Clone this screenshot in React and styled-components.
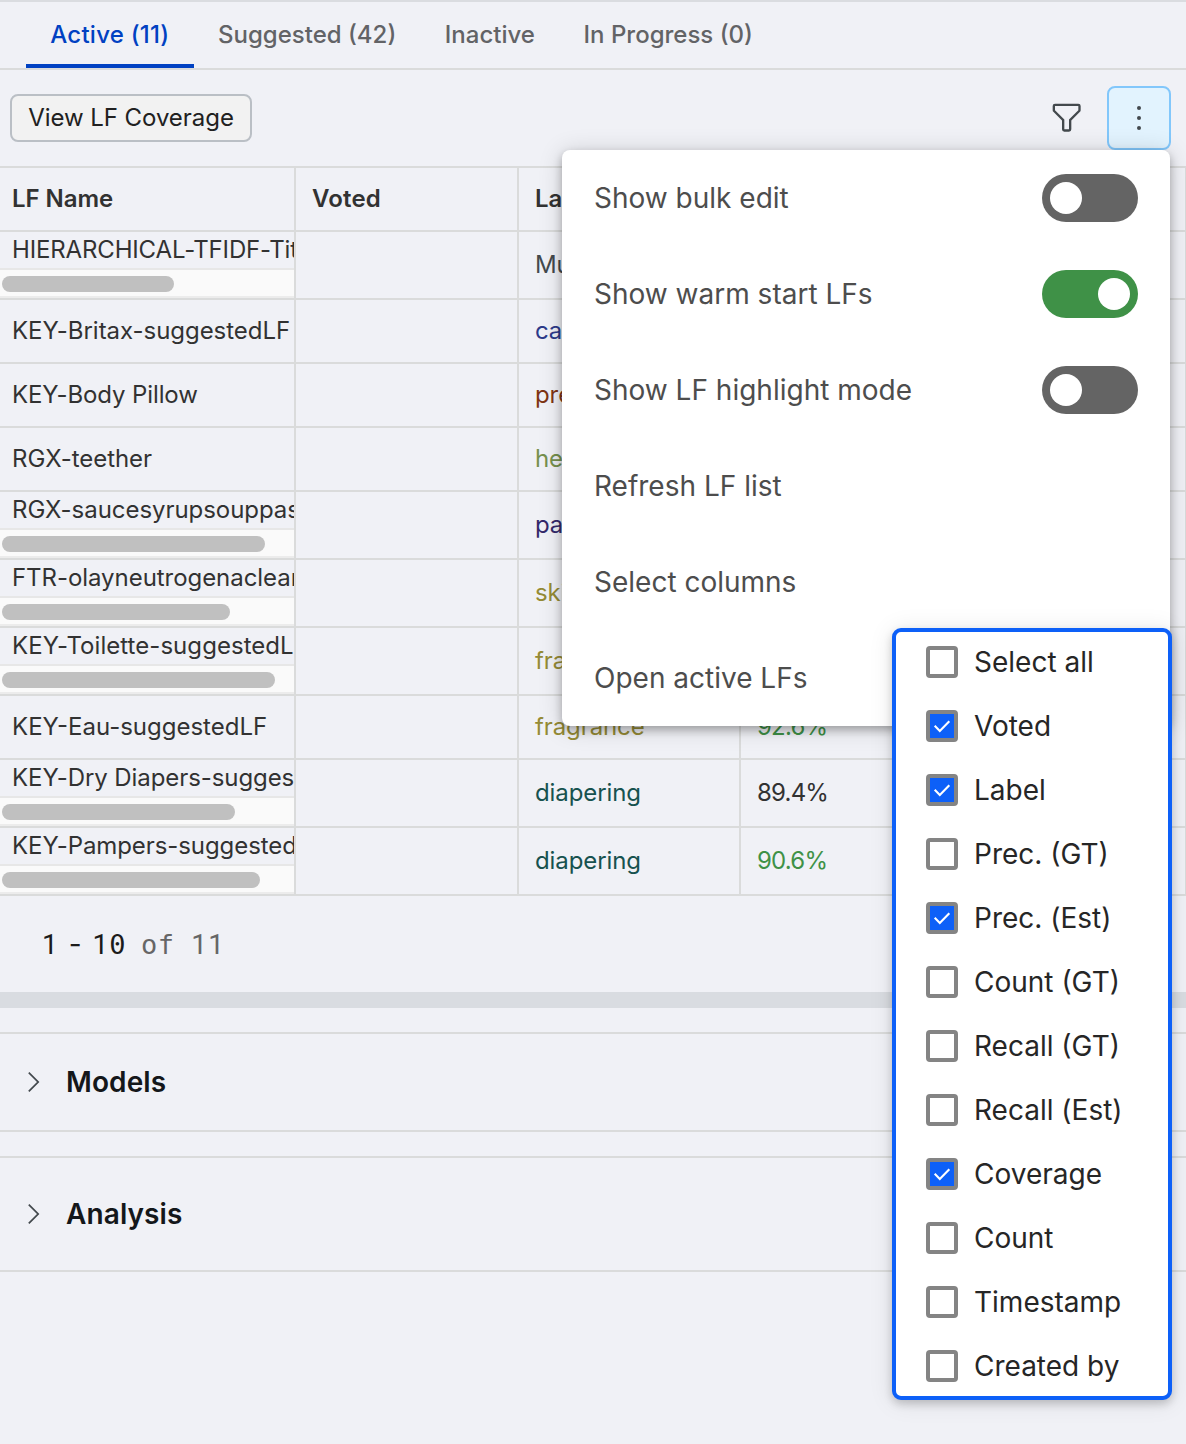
import React from 'react';
import styled, { createGlobalStyle } from 'styled-components';

const line = '#dadbdb';

const GlobalStyle = createGlobalStyle`
  *, *::before, *::after { box-sizing: border-box; }
  body {
    margin: 0;
    background: #f0f1f6;
    font-family: Inter, "Liberation Sans", sans-serif;
    -webkit-font-smoothing: antialiased;
  }
`;

const Page = styled.div`
  position: relative;
  height: 1444px;
  overflow: hidden;
  background: #f0f1f6;
  color: #323232;
  font-size: 24px;
  letter-spacing: 0;
`;

const Tabs = styled.nav`
  display: flex;
  height: 70px;
  padding-left: 26px;
  border-top: 2px solid #dadce0;
  border-bottom: 2px solid ${line};
`;

const Tab = styled.a`
  height: 66px;
  padding: 0 24.3px;
  line-height: 65px;
  font-weight: 500;
  letter-spacing: ${p => (p.$active ? '0.24px' : '0')};
  color: ${p => (p.$active ? '#0041c2' : '#626366')};
  border-bottom: 4px solid ${p => (p.$active ? '#0041c2' : 'transparent')};
`;

const Toolbar = styled.div`
  display: flex;
  align-items: center;
  justify-content: space-between;
  height: 96px;
  padding: 0 15px 0 10px;
`;

const CoverageButton = styled.button`
  height: 48px;
  width: 242px;
  padding: 0 0 2px;
  border: 2px solid #babfc5;
  border-radius: 8px;
  background: #f2f2f2;
  color: #212121;
  font: inherit;
  letter-spacing: -0.05px;
`;

const Actions = styled.div`
  display: flex;
  align-items: center;
  gap: 21.5px;
`;

const MenuButton = styled.button`
  display: flex;
  align-items: center;
  justify-content: center;
  width: 64px;
  height: 64px;
  padding: 0;
  border: 2px solid #82c7fb;
  border-radius: 8px;
  background: #e2f3fe;
`;

const Table = styled.div`
  border-top: 2px solid ${line};
`;

const Row = styled.div`
  display: grid;
  grid-template-columns: 296px 223px 222px 222px 224px;
  height: ${p => (p.$tall ? 68 : 64)}px;
`;

const Cell = styled.div`
  display: flex;
  align-items: center;
  min-width: 0;
  padding-left: ${p => (p.$first ? 12 : 16)}px;
  padding-bottom: 2px;
  border-right: 2px solid ${line};
  border-bottom: 2px solid ${line};
  overflow: hidden;
  white-space: nowrap;
  color: ${p => p.$color || '#323232'};
  font-weight: ${p => (p.$head ? 600 : 400)};
  letter-spacing: ${p => p.$spacing || '-0.04px'};
`;

const ScrollCell = styled.div`
  min-width: 0;
  border-right: 2px solid ${line};
  border-bottom: 2px solid ${line};
  overflow: hidden;
`;

const ScrollText = styled.div`
  height: 36px;
  padding-left: 12px;
  line-height: 36px;
  letter-spacing: ${p => p.$spacing || '-0.05px'};
  white-space: nowrap;
  overflow: hidden;
`;

const Track = styled.div`
  height: 30px;
  padding: 6px 2px;
  border-top: 2px solid #e7e7e7;
  border-bottom: 2px solid #ececec;
  background: #fafafa;
`;

const Thumb = styled.div`
  width: ${p => p.$width}px;
  height: 16px;
  border-radius: 8px;
  background: #c0c0c0;
`;

const Pagination = styled.div`
  display: flex;
  align-items: center;
  height: 96px;
  padding-left: 42px;
  font-family: Roboto, "Liberation Sans", sans-serif;
  font-size: 28px;
  letter-spacing: 1.1px;
  white-space: pre;
  color: #1b1b1b;
`;

const Dash = styled.span`
  width: 33.6px;
  font-family: Inter, sans-serif;
  text-align: center;
`;

const Zero = styled.span`
  font-family: "DejaVu Sans Mono", monospace;
  font-size: 27px;
  letter-spacing: 0;
`;

const Total = styled.span`
  margin-left: 15.5px;
  color: #666;
`;

const Of = styled.span`
  font-family: "DejaVu Sans Mono", monospace;
  font-size: 27px;
  letter-spacing: 0.5px;
`;

const Divider = styled.div`
  height: 16px;
  background: #d9dce1;
`;

const Panel = styled.section`
  display: flex;
  align-items: center;
  gap: 17px;
  height: ${p => p.$height}px;
  margin-top: 24px;
  padding-left: 17px;
  border-top: 2px solid ${line};
  border-bottom: 2px solid ${line};
  color: #14171a;
  font-size: 28px;
  font-weight: 600;
  letter-spacing: 0.1px;
`;

const Menu = styled.div`
  position: absolute;
  left: 562px;
  top: 150px;
  width: 608px;
  height: 576px;
  border-radius: 8px;
  background: #fff;
  box-shadow: 0 4px 8px rgba(0, 0, 0, 0.27), 0 2px 24px rgba(0, 0, 0, 0.16);
`;

const MenuItem = styled.div`
  display: flex;
  align-items: center;
  justify-content: space-between;
  height: 96px;
  padding: 0 32px;
  color: #4d4d4d;
  font-size: 28px;
  letter-spacing: 0;
`;

const Toggle = styled.span`
  display: flex;
  justify-content: ${p => (p.$on ? 'flex-end' : 'flex-start')};
  width: 96px;
  height: 48px;
  padding: 8px;
  border-radius: 24px;
  background: ${p => (p.$on ? '#3f9147' : '#646464')};
`;

const Knob = styled.span`
  width: 32px;
  height: 32px;
  border-radius: 50%;
  background: #fff;
`;

const Columns = styled.div`
  position: absolute;
  left: 892px;
  top: 628px;
  width: 280px;
  height: 772px;
  padding: 0 30px;
  border: 4px solid #0d60f8;
  border-radius: 9px;
  background: #fff;
  box-shadow: 0 4px 8px rgba(0, 0, 0, 0.18), 0 2px 24px rgba(0, 0, 0, 0.1);
`;

const Option = styled.label`
  display: flex;
  align-items: center;
  gap: 16px;
  height: 64px;
  margin-top: ${p => (p.$first ? -2 : 0)}px;
  color: #262626;
  font-size: 28px;
  letter-spacing: 0;
  white-space: nowrap;
`;

const Box = styled.span`
  display: flex;
  width: 32px;
  height: 32px;
  border: 4px solid #848484;
  border-radius: 4px;
  background: ${p => (p.$checked ? '#0d60f8' : '#fff')};
`;

const FilterIcon = () => (
  <svg width="37.33" height="37.33" viewBox="0 0 32 32" fill="#43494d">
    <path d="M18 28H14a2 2 0 0 1-2-2V18.41L4.59 11A2 2 0 0 1 4 9.59V6A2 2 0 0 1 6 4H26a2 2 0 0 1 2 2V9.59A2 2 0 0 1 27.41 11L20 18.41V26A2 2 0 0 1 18 28ZM6 6V9.59l8 8V26h4V17.59l8-8V6Z" />
  </svg>
);

const DotsIcon = () => (
  <svg width="32" height="32" viewBox="0 0 32 32" fill="#43494d">
    <circle cx="16" cy="6" r="2" />
    <circle cx="16" cy="16" r="2" />
    <circle cx="16" cy="26" r="2" />
  </svg>
);

const ChevronIcon = () => (
  <svg width="32" height="32" viewBox="0 0 32 32" fill="#43494d">
    <path d="M22.4 16 12.4 26l-1.2-1.2 8.8-8.8-8.8-8.8L12.4 6z" />
  </svg>
);

const CheckIcon = () => (
  <svg width="24" height="24" viewBox="0 0 24 24" fill="none" stroke="#fff" strokeWidth="2.1">
    <path d="M4.7 11.8 9.8 16.9 19.3 7.2" />
  </svg>
);

const tabs = [
  { label: 'Active (11)', active: true },
  { label: 'Suggested (42)' },
  { label: 'Inactive' },
  { label: 'In Progress (0)' },
];

const rows = [
  { name: 'HIERARCHICAL-TFIDF-Title', spacing: '-0.15px', thumb: 172, label: 'Multi', color: '#43494d' },
  { name: 'KEY-Britax-suggestedLF', label: 'car', color: '#2c3a8a' },
  { name: 'KEY-Body Pillow', spacing: '-0.12px', label: 'pre', color: '#7e3414' },
  { name: 'RGX-teether', label: 'hea', color: '#76904e' },
  { name: 'RGX-saucesyrupsouppasta', thumb: 263, label: 'pa', color: '#34296b' },
  { name: 'FTR-olayneutrogenaclean', thumb: 228, label: 'skin', color: '#958b35' },
  { name: 'KEY-Toilette-suggestedLF', spacing: '0.05px', thumb: 273, label: 'fra', color: '#958b35' },
  { name: 'KEY-Eau-suggestedLF', spacing: '0', label: 'fragrance', color: '#958b35', prec: '92.6%', good: true },
  { name: 'KEY-Dry Diapers-suggestedLF', spacing: '-0.08px', thumb: 233, label: 'diapering', color: '#17524f', prec: '89.4%' },
  { name: 'KEY-Pampers-suggestedLF', spacing: '-0.08px', thumb: 258, label: 'diapering', color: '#17524f', prec: '90.6%', good: true },
];

const menuItems = [
  { label: 'Show bulk edit', toggle: true, on: false },
  { label: 'Show warm start LFs', toggle: true, on: true },
  { label: 'Show LF highlight mode', toggle: true, on: false },
  { label: 'Refresh LF list' },
  { label: 'Select columns' },
  { label: 'Open active LFs' },
];

const options = [
  ['Select all', false],
  ['Voted', true],
  ['Label', true],
  ['Prec. (GT)', false],
  ['Prec. (Est)', true],
  ['Count (GT)', false],
  ['Recall (GT)', false],
  ['Recall (Est)', false],
  ['Coverage', true],
  ['Count', false],
  ['Timestamp', false],
  ['Created by', false],
];

export default function App() {
  return (
    <Page>
      <GlobalStyle />
      <Tabs>
        {tabs.map(t => <Tab key={t.label} $active={t.active}>{t.label}</Tab>)}
      </Tabs>
      <Toolbar>
        <CoverageButton>View LF Coverage</CoverageButton>
        <Actions>
          <FilterIcon />
          <MenuButton aria-label="More options"><DotsIcon /></MenuButton>
        </Actions>
      </Toolbar>
      <Table>
        <Row>
          <Cell $first $head>LF Name</Cell>
          <Cell $head $spacing="0.15px">Voted</Cell>
          <Cell $head>La</Cell>
          <Cell />
          <Cell />
        </Row>
        {rows.map(r => (
          <Row key={r.name} $tall={!!r.thumb}>
            {r.thumb ? (
              <ScrollCell>
                <ScrollText $spacing={r.spacing}>{r.name}</ScrollText>
                <Track><Thumb $width={r.thumb} /></Track>
              </ScrollCell>
            ) : (
              <Cell $first $spacing={r.spacing}>{r.name}</Cell>
            )}
            <Cell />
            <Cell $color={r.color} $spacing="-0.1px">{r.label}</Cell>
            <Cell $color={r.good ? '#3f9147' : '#323232'} $spacing="-0.8px">{r.prec}</Cell>
            <Cell />
          </Row>
        ))}
      </Table>
      <Pagination>
        <span>1</span>
        <Dash>-</Dash>
        <span>1<Zero>0</Zero></span>
        <Total><Of>of </Of>11</Total>
      </Pagination>
      <Divider />
      <Panel $height={100}><ChevronIcon />Models</Panel>
      <Panel $height={116}><ChevronIcon />Analysis</Panel>
      <Menu>
        {menuItems.map(m => (
          <MenuItem key={m.label}>
            {m.label}
            {m.toggle && <Toggle $on={m.on}><Knob /></Toggle>}
          </MenuItem>
        ))}
      </Menu>
      <Columns>
        {options.map(([label, checked], i) => (
          <Option key={label} $first={i === 0}>
            <Box $checked={checked}>{checked && <CheckIcon />}</Box>
            {label}
          </Option>
        ))}
      </Columns>
    </Page>
  );
}
